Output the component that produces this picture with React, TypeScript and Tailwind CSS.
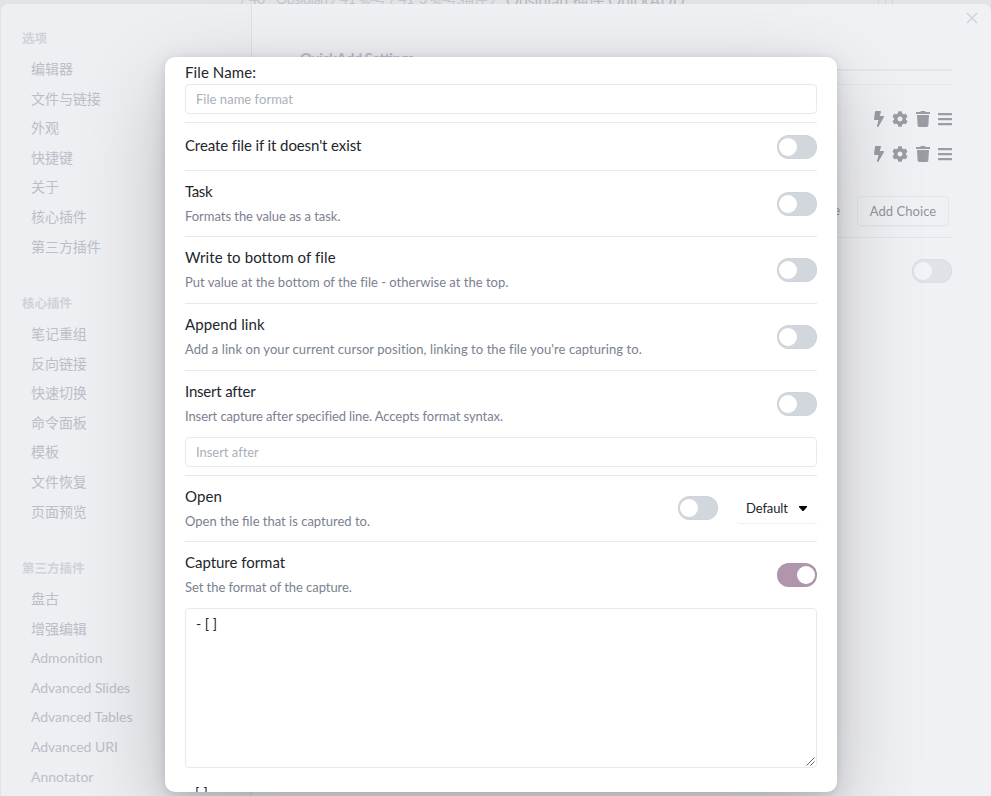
import type { ReactNode } from 'react';
import { FaBars, FaBolt, FaCog, FaTrash } from 'react-icons/fa';

const groups = [
  { title: '选项', items: ['编辑器', '文件与链接', '外观', '快捷键', '关于', '核心插件', '第三方插件'] },
  { title: '核心插件', items: ['笔记重组', '反向链接', '快速切换', '命令面板', '模板', '文件恢复', '页面预览'] },
  {
    title: '第三方插件',
    items: ['盘古', '增强编辑', 'Admonition', 'Advanced Slides', 'Advanced Tables', 'Advanced URI', 'Annotator'],
  },
];

function Toggle({ on = false, faded = false }: { on?: boolean; faded?: boolean }) {
  const track = on
    ? 'bg-[#b095ac] justify-end'
    : faded
      ? 'bg-[#dfe2e9] justify-start'
      : 'bg-[#d2d7de] justify-start';
  return (
    <div className={`flex h-6 w-10 shrink-0 items-center rounded-full px-0.5 shadow-[inset_0_0_1px_rgba(0,0,0,0.15)] ${track}`}>
      <div className={`size-[18px] rounded-full ${faded ? 'bg-[#f2f3f6]' : 'bg-white'}`} />
    </div>
  );
}

function Row({
  name,
  nameTracking = 'tracking-[0.1px]',
  desc,
  descTracking = '',
  height,
  control,
  children,
}: {
  name: string;
  nameTracking?: string;
  desc?: string;
  descTracking?: string;
  height: string;
  control: ReactNode;
  children?: ReactNode;
}) {
  return (
    <div className={`shrink-0 border-t border-[#e8e9eb] ${height}`}>
      <div className={`flex justify-between ${desc ? 'pt-[10px]' : 'pt-[5px]'}`}>
        <div className={desc ? '' : 'pt-[7px]'}>
          <div className={`h-5 text-[15px] leading-5 text-[#22262d] ${nameTracking}`}>{name}</div>
          {desc && <div className={`mt-[5px] h-5 text-[13px] leading-[21px] text-[#7b8190] ${descTracking}`}>{desc}</div>}
        </div>
        <div className={desc ? 'pt-[11px]' : 'pt-[7px]'}>{control}</div>
      </div>
      {children}
    </div>
  );
}

function Field({ text, tracking }: { text: string; tracking: string }) {
  return (
    <div className={`flex h-[30px] items-center rounded border border-[#e8e9eb] px-2.5 pt-[2px] text-[13px] text-[#abafb8] ${tracking}`}>
      {text}
    </div>
  );
}

function ChoiceActions() {
  return (
    <div className="flex h-[35px] items-center justify-end gap-2 text-[16px] text-[#9a9ba3]">
      <FaBolt className="h-4 w-[10px]" />
      <FaCog className="size-4" />
      <FaTrash className="h-4 w-[14px]" />
      <FaBars className="h-4 w-[14px]" />
    </div>
  );
}

export default function App() {
  return (
    <div className="relative flex h-[796px] w-[991px] flex-col overflow-hidden bg-[#e2e3e6] font-[Lato,'Noto_Sans_CJK_SC',sans-serif]">
      {/* Lower edge of the window title bar */}
      <div className="flex h-1 shrink-0 items-end overflow-hidden pl-[240px] whitespace-pre text-[#c3c4c9]">
        <div className="h-1 w-[266px] text-[14px] leading-[20px] tracking-[-0.35px]">
          <div className="-mt-[11px]">/ 40 - Obsidian / 41 參考 / 41-3 參考.插件 /</div>
        </div>
        <div className="h-1 text-[16px] leading-[20px] text-[#b9bac0]">
          <div className="-mt-[10px]">Obsidian 插件 QuickADD</div>
        </div>
        <div className="ml-auto flex h-1 w-[113px] gap-[6px]">
          <div className="w-px bg-[#d2d3d7]" />
          <div className="w-px bg-[#d2d3d7]" />
          <div className="w-px bg-[#d2d3d7]" />
        </div>
      </div>

      {/* Settings window behind the dialog */}
      <div className="ml-px flex min-h-0 flex-1 overflow-hidden rounded-t-lg bg-[#f0f1f5]">
        <div className="w-[251px] shrink-0 border-r border-[#dfe0e4] bg-[#eeeff3] pt-[20px]">
          {groups.map((g) => (
            <div key={g.title} className="h-[265px]">
              <div className="h-[30px] pl-[21px] text-[12.5px] leading-[30px] font-bold text-[#d0d2d8]">{g.title}</div>
              {g.items.map((item) => (
                <div key={item} className="h-[29.6px] pl-[30px] text-[14px] leading-[30.5px] tracking-[-0.05px] text-[#bbbec7]">
                  {item}
                </div>
              ))}
            </div>
          ))}
        </div>

        <div className="relative flex-1 pr-[39px] pl-[48px]">
          <svg className="absolute top-[8px] right-[13px] size-3" viewBox="0 0 12 12" stroke="#ced0d6" strokeWidth="1.3">
            <path d="M1 1l10 10M11 1L1 11" />
          </svg>
          <div className="h-[67px] border-b-2 border-[#e6e7eb] pt-[44px] text-[15px] leading-5 font-bold tracking-[-0.65px] text-[#c6b9d2]">
            QuickAdd Settings
          </div>
          <div className="mt-[13px] border-t border-[#e6e7eb] pt-[16px]">
            <ChoiceActions />
            <ChoiceActions />
          </div>
          <div className="flex h-[67px] justify-end gap-[14px] border-b border-[#e4e5ea] pt-[25px] pr-[3px] text-[13px] text-[#92949c]">
            <div className="flex h-[30px] items-center rounded border border-[#e5e6ea]/40 px-[2px]">Template</div>
            <div className="flex h-[30px] w-[92px] items-center justify-center rounded border border-[#e5e6ea] pt-[1px] tracking-[0.05px] shadow-[0_1px_1px_rgba(0,0,0,0.03)]">
              Add Choice
            </div>
          </div>
          <div className="flex justify-end pt-[21px]">
            <Toggle faded />
          </div>
        </div>
      </div>

      {/* Capture choice dialog */}
      <div className="absolute top-[57px] left-[165px] flex h-[735px] w-[672px] flex-col rounded-[10px] bg-white shadow-[0_1.8px_7.3px_rgba(0,0,0,0.071),0_6.3px_24.7px_rgba(0,0,0,0.112),0_30px_90px_rgba(0,0,0,0.2)]">
        <div className="flex flex-1 flex-col overflow-hidden px-5">
          <div className="h-[65px] shrink-0 pt-[5px]">
            <div className="h-[22px] text-[15px] leading-5 tracking-[0.1px] text-[#22262d]">File Name:</div>
            <Field text="File name format" tracking="tracking-[0.03px]" />
          </div>
          <Row
            name="Create file if it doesn't exist"
            nameTracking="tracking-[-0.1px]"
            height="h-[48px]"
            control={<Toggle />}
          />
          <Row
            name="Task"
            nameTracking="tracking-[-0.4px]"
            desc="Formats the value as a task."
            descTracking="tracking-[-0.04px]"
            height="h-[66px]"
            control={<Toggle />}
          />
          <Row
            name="Write to bottom of file"
            desc="Put value at the bottom of the file - otherwise at the top."
            descTracking="tracking-[0.01px]"
            height="h-[67px]"
            control={<Toggle />}
          />
          <Row
            name="Append link"
            desc="Add a link on your current cursor position, linking to the file you're capturing to."
            descTracking="tracking-[0.07px]"
            height="h-[67px]"
            control={<Toggle />}
          />
          <Row
            name="Insert after"
            nameTracking="tracking-[-0.2px]"
            desc="Insert capture after specified line. Accepts format syntax."
            descTracking="tracking-[-0.09px]"
            height="h-[105px]"
            control={<Toggle />}
          >
            <div className="pt-[11px]">
              <Field text="Insert after" tracking="tracking-[-0.03px]" />
            </div>
          </Row>
          <Row
            name="Open"
            desc="Open the file that is captured to."
            height="h-[66px]"
            control={
              <div className="-mt-px flex gap-[18px]">
                <Toggle />
                <div className="-mt-[3px] flex h-[30px] w-[81px] items-center justify-between rounded pr-[10px] pl-[10px] text-[13px] tracking-[-0.1px] text-[#22262d] shadow-[0_1px_1px_rgba(0,0,0,0.06)]">
                  <span className="pt-[2px]">Default</span>
                  <svg className="h-[5px] w-2" viewBox="0 0 8 5">
                    <path d="M0 0h8v1L4.5 5h-1L0 1z" />
                  </svg>
                </div>
              </div>
            }
          />
          <Row
            name="Capture format"
            nameTracking="tracking-[-0.03px]"
            desc="Set the format of the capture."
            descTracking="tracking-[-0.06px]"
            height="h-[227px]"
            control={<Toggle on />}
          >
            <div className="mt-[11px] flex h-[160px] flex-col justify-between rounded border border-[#e8e9eb]">
              <div className="pt-[5px] pl-[10px] text-[14px] leading-5 text-[#22262d]">- [ ]</div>
              <svg className="mr-[1px] mb-[1px] size-[9px] self-end" viewBox="0 0 9 9" stroke="#555" strokeWidth="0.9">
                <path d="M0.5 8.5L8.5 0.5M4.5 8.5L8.5 4.5" />
              </svg>
            </div>
          </Row>
          <div className="shrink-0 pt-[15px] pl-[10px] text-[14px] leading-5 tracking-[0.3px] text-[#22262d]">[ ]</div>
        </div>
      </div>
    </div>
  );
}
